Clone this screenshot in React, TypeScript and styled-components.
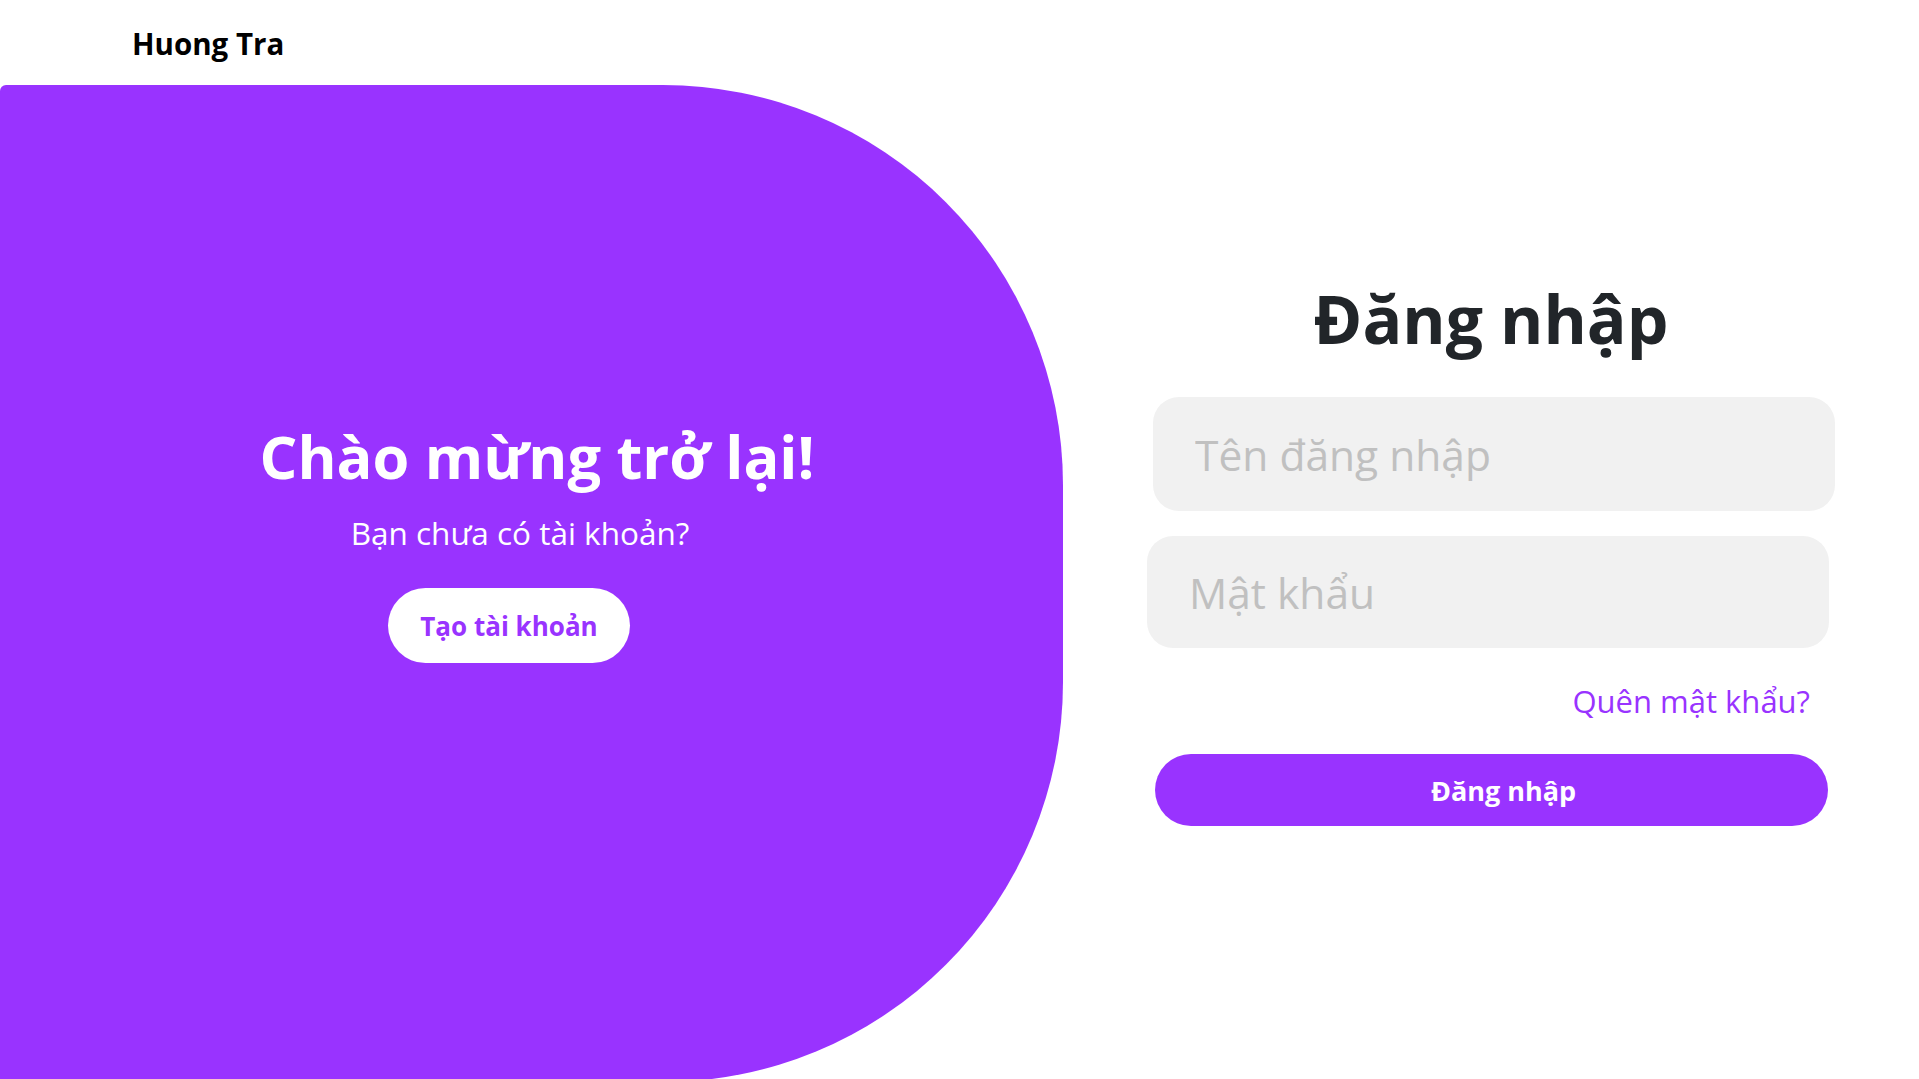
import React from 'react';
import styled, { createGlobalStyle } from 'styled-components';

const PURPLE = '#9933ff';

const GlobalStyle = createGlobalStyle`
  html, body {
    margin: 0;
    padding: 0;
    background: #ffffff;
    overflow: hidden;
  }

  * {
    box-sizing: border-box;
  }

  body {
    font-family: 'Open Sans', 'Noto Sans', sans-serif;
  }
`;

const Page = styled.div`
  width: 100vw;
  height: 100vh;
  display: flex;
  flex-direction: column;
  overflow: hidden;
`;

const Header = styled.header`
  height: 85px;
  flex-shrink: 0;
  padding: 29px 0 0 132px;
`;

const Brand = styled.div`
  font-size: 29.5px;
  line-height: 30px;
  font-weight: 700;
  color: #000000;
`;

const Main = styled.main`
  display: flex;
  flex: 1;
  min-height: 0;
`;

const WelcomePanel = styled.section`
  width: 1063px;
  height: 997px;
  flex-shrink: 0;
  background: ${PURPLE};
  border-radius: 6px 400px 400px 0;
  display: flex;
  flex-direction: column;
  align-items: center;
  padding-top: 335px;
  color: #ffffff;
`;

const WelcomeTitle = styled.h1`
  margin: 0 0 0 11px;
  font-size: 59.5px;
  line-height: 72px;
  font-weight: 700;
`;

const WelcomeText = styled.p`
  margin: 21px 23px 0 0;
  font-size: 31.5px;
  line-height: 40px;
  font-weight: 400;
`;

const CreateButton = styled.button`
  margin: 35px 45px 0 0;
  width: 242px;
  height: 75px;
  border: none;
  border-radius: 38px;
  background: #ffffff;
  color: ${PURPLE};
  font-family: inherit;
  font-size: 26px;
  font-weight: 700;
  cursor: pointer;
`;

const FormSide = styled.section`
  flex: 1;
  display: flex;
  justify-content: center;
`;

const Form = styled.form`
  width: 688px;
  display: flex;
  flex-direction: column;
  padding-top: 194px;
`;

const FormTitle = styled.h2`
  margin: 0;
  text-align: center;
  font-size: 66px;
  line-height: 79px;
  font-weight: 700;
  color: #212529;
`;

const Fields = styled.div`
  display: flex;
  flex-direction: column;
  gap: 25px;
  margin-top: 39px;
`;

const Field = styled.input<{ $shift?: number; $height: number }>`
  width: 682px;
  height: ${(p) => p.$height}px;
  margin-left: ${(p) => p.$shift ?? 0}px;
  border: none;
  outline: none;
  border-radius: 26px;
  background: #f1f1f1;
  padding: 0 42px;
  font-family: inherit;
  font-size: 42.5px;
  color: #333333;

  &::placeholder {
    color: #c0c0c0;
  }
`;

const ForgotLink = styled.a`
  align-self: flex-end;
  margin: 33px 25px 0 0;
  font-size: 31px;
  line-height: 40px;
  color: ${PURPLE};
  text-decoration: none;
  cursor: pointer;
`;

const LoginButton = styled.button`
  margin: 33px 0 0 8px;
  width: 673px;
  height: 72px;
  border: none;
  border-radius: 36px;
  background: ${PURPLE};
  color: #ffffff;
  padding-left: 30px;
  font-family: inherit;
  font-size: 27px;
  font-weight: 700;
  cursor: pointer;
`;

export default function App() {
  return (
    <>
      <GlobalStyle />
      <Page>
        <Header>
          <Brand>Huong Tra</Brand>
        </Header>
        <Main>
          <WelcomePanel>
            <WelcomeTitle>Chào mừng trở lại!</WelcomeTitle>
            <WelcomeText>Bạn chưa có tài khoản?</WelcomeText>
            <CreateButton type="button">Tạo tài khoản</CreateButton>
          </WelcomePanel>
          <FormSide>
            <Form onSubmit={(e) => e.preventDefault()}>
              <FormTitle>Đăng nhập</FormTitle>
              <Fields>
                <Field $shift={6} $height={114} type="text" placeholder="Tên đăng nhập" />
                <Field $height={112} type="password" placeholder="Mật khẩu" />
              </Fields>
              <ForgotLink>Quên mật khẩu?</ForgotLink>
              <LoginButton type="submit">Đăng nhập</LoginButton>
            </Form>
          </FormSide>
        </Main>
      </Page>
    </>
  );
}
